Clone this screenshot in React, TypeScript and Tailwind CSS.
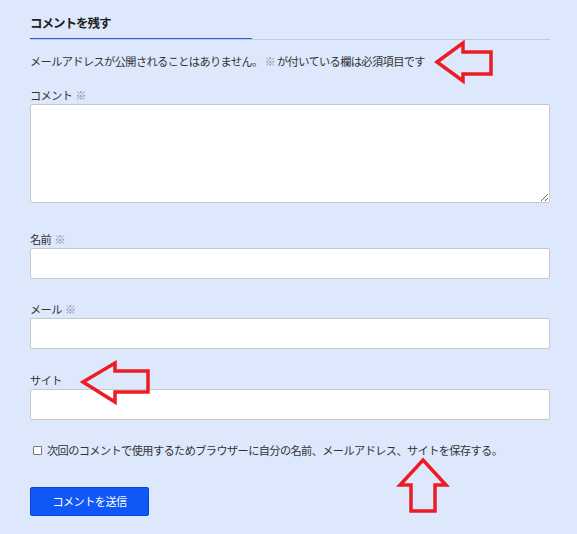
import React from 'react';

const font = { fontFamily: '"Noto Sans CJK JP", "Noto Sans", sans-serif' };

// red annotation arrows drawn over the form
const Arrow = ({ points }: { points: string }) => (
  <svg className="absolute left-0 top-0 pointer-events-none" width="577" height="534" viewBox="0 0 577 534">
    <polygon points={points} fill="none" stroke="#ec1c24" strokeWidth="3.5" strokeLinejoin="miter" />
  </svg>
);

const Req = () => <span className="text-[#8a8f9a] ml-[3px]">※</span>;

export default function App() {
  return (
    <div
      className="relative w-[577px] h-[534px] bg-[#dde8fc] text-[#333] overflow-hidden text-[11.2px] tracking-[-0.6px]"
      style={font}
    >
      <div className="pl-[30px] w-[550px] pt-[13px]">
        {/* heading */}
        <div className="border-b border-[#c3cad8]">
          <div className="w-[222px] border-b border-[#1d5cf0] pb-[5px]">
            <h3 className="text-[12.5px] tracking-[-1px] leading-[20px] font-bold text-[#222]">コメントを残す</h3>
          </div>
        </div>

        <p className="mt-[12px] leading-[18px]">
          メールアドレスが公開されることはありません。 <span className="text-[#8a8f9a]">※</span> が付いている欄は必須項目です
        </p>

        <label className="block mt-[16px] leading-[18px]">
          コメント<Req />
        </label>
        <textarea className="block w-full h-[99px] bg-white border border-[#c8c8c8] rounded-[2px] outline-none resize-y" />

        <label className="block mt-[28px] leading-[17px]">
          名前<Req />
        </label>
        <input type="text" className="block w-full h-[31px] bg-white border border-[#c8c8c8] rounded-[2px] outline-none" />

        <label className="block mt-[22px] leading-[17px]">
          メール<Req />
        </label>
        <input type="email" className="block w-full h-[31px] bg-white border border-[#c8c8c8] rounded-[2px] outline-none" />

        <label className="block mt-[23px] leading-[17px]">サイト</label>
        <input type="url" className="block w-full h-[31px] bg-white border border-[#c8c8c8] rounded-[2px] outline-none" />

        <label className="mt-[21px] flex items-center leading-[18px]">
          <input
            type="checkbox"
            className="appearance-none shrink-0 w-[9px] h-[9px] ml-[3px] mr-[5px] bg-white border border-[#777] rounded-[1px]"
          />
          次回のコメントで使用するためブラウザーに自分の名前、メールアドレス、サイトを保存する。
        </label>

        <button className="mt-[28px] w-[119px] h-[29px] bg-[#0f57f6] border border-[#0a45c8] rounded-[2px] text-white">
          コメントを送信
        </button>
      </div>

      <Arrow points="437,62 463,43 463,52 491,52 491,74 463,74 463,81" />
      <Arrow points="83,382 115,363 115,371 148,371 148,392 115,392 115,402" />
      <Arrow points="423,460 446,485 435,485 435,511 411,511 411,485 400,485" />
    </div>
  );
}
